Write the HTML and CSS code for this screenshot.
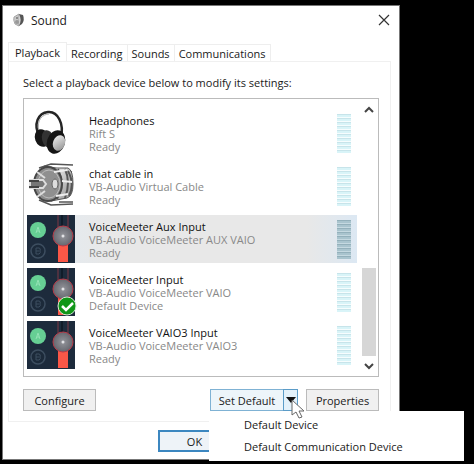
FILE: index.html
```html
<!DOCTYPE html>
<html lang="en">
<head>
  <meta charset="UTF-8">
  <meta name="viewport" content="width=device-width, initial-scale=1.0">
  <title>Sound</title>
  <link rel="stylesheet" href="styles.css">
</head>
<body>
  <!-- shared drawings and meters -->
  <svg class="defs" aria-hidden="true">
    <defs>
      <linearGradient id="metal" x1="0" y1="0" x2="1" y2="1">
        <stop offset="0" stop-color="#f4f4f4"/>
        <stop offset="1" stop-color="#8d8d8d"/>
      </linearGradient>
      <radialGradient id="knob">
        <stop offset="0" stop-color="#94959b"/>
        <stop offset="1" stop-color="#66676f"/>
      </radialGradient>
      <symbol id="mixer" viewBox="0 0 48 48">
        <rect width="48" height="48" fill="#1d2b3c"/>
        <path d="M31 0v12M41 0v12" stroke="#5d3441" stroke-width="1.5"/>
        <path d="M35 0v12" stroke="#111c29" stroke-width="2"/>
        <rect x="31" y="26" width="10" height="21" fill="#fb5747"/>
        <circle cx="11" cy="15" r="8" fill="#66cf94"/>
        <path d="M9 18l2-6 2 6M10 16h2" fill="none" stroke="#92e2b4"/>
        <circle cx="11" cy="36" r="7" fill="#1c2a3a" stroke="#3d4e60" stroke-width="1.5"/>
        <path d="M9 33v6h3q2-1 1-3 1-3-1-3zM9 36h3" fill="none" stroke="#3d4e60"/>
        <circle cx="36" cy="21" r="10" fill="url(#knob)" stroke="#b83b48"/>
        <circle cx="36" cy="21" r="1.5" fill="#e2e2e6"/>
      </symbol>
    </defs>
  </svg>

  <main class="window">
    <header class="titlebar">
      <svg class="app-icon" width="12" height="14" viewBox="0 0 12 14">
        <path d="M1 4L6 1v12L2 11Q0 7 1 4z" fill="#c9c9c9" stroke="#a5a5a5"/>
        <path d="M6 1l4 1q2 5-1 9l-3 2q3-6 0-12z" fill="#555"/>
        <circle cx="4" cy="5" r="1" fill="#777"/>
        <circle cx="4" cy="9" r="2" fill="#999"/>
      </svg>
      <h1>Sound</h1>
      <button class="close" aria-label="Close">
        <svg width="12" height="12" viewBox="0 0 12 12"><path d="M1 1l10 10M11 1L1 11" stroke="#333" stroke-width="1.2"/></svg>
      </button>
    </header>

    <nav class="tabs">
      <button class="tab active">Playback</button>
      <button class="tab">Recording</button>
      <button class="tab">Sounds</button>
      <button class="tab">Communications</button>
    </nav>

    <section class="panel">
      <p>Select a playback device below to modify its settings:</p>

      <div class="list">
        <ul class="devices">
          <li class="device">
            <svg class="icon" viewBox="0 0 48 48">
              <path d="M13 29C5 14 12 4 21 3c10-1 16 12 13 25" fill="none" stroke="#252525" stroke-width="2.5"/>
              <path d="M12 22C9 11 16 5 22 5" fill="none" stroke="#aaa"/>
              <ellipse cx="15" cy="29" rx="7" ry="9" fill="#161616" transform="rotate(-20 15 29)"/>
              <ellipse cx="21" cy="30" rx="6" ry="9" fill="#333" transform="rotate(-15 21 30)"/>
              <ellipse cx="29" cy="33" rx="9" ry="12" fill="#151515" transform="rotate(18 29 33)"/>
              <ellipse cx="32" cy="34" rx="6" ry="8" fill="url(#metal)" transform="rotate(20 32 34)"/>
            </svg>
            <div class="info"><strong>Headphones</strong><span>Rift S</span><span>Ready</span></div>
            <div class="meter"></div>
          </li>
          <li class="device">
            <svg class="icon" viewBox="0 0 48 48">
              <path d="M12 6l12-4 22 1M17 4l28 6M12 38l12 5 22-1M32 40h14" fill="none" stroke="#555" stroke-width="1.5"/>
              <path d="M27 6h14q5 2 5 16 0 12-6 14l-16 3z" fill="url(#metal)" stroke="#555"/>
              <path d="M31 7q7 15-1 30M38 7q6 13 0 29M41 9q7 13 1 25" fill="none" stroke="#555" stroke-width="2"/>
              <ellipse cx="21" cy="22" rx="14" ry="17" fill="#8c8c8c" stroke="#474747" stroke-width="2"/>
              <ellipse cx="22" cy="22" rx="11" ry="14" fill="#8f8f8f" stroke="#bcbcbc"/>
              <path d="M3 18h13l3 4-3 4H3zM10 10l8 6M10 35l8-6" fill="#777" stroke="#ddd" stroke-width="2"/>
              <path d="M2 19h10M2 25h10" stroke="#444" stroke-width="2"/>
              <ellipse cx="28" cy="22" rx="3" ry="5" fill="#ddd" stroke="#666"/>
              <path d="M27 10l13-2M29 34l12-2M35 19l10 1" stroke="#eee" stroke-width="2"/>
            </svg>
            <div class="info"><strong>chat cable in</strong><span>VB-Audio Virtual Cable</span><span>Ready</span></div>
            <div class="meter"></div>
          </li>
          <li class="device selected">
            <svg class="icon"><use href="#mixer"/></svg>
            <div class="info"><strong>VoiceMeeter Aux Input</strong><span>VB-Audio VoiceMeeter AUX VAIO</span><span>Ready</span></div>
            <div class="meter"></div>
          </li>
          <li class="device">
            <svg class="icon"><use href="#mixer"/></svg>
            <svg class="badge" viewBox="0 0 20 20">
              <circle cx="10" cy="10" r="9" fill="#109618" stroke="#d5ead6"/>
              <path d="M5 10l4 4 7-7" fill="none" stroke="#fff" stroke-width="2.5"/>
            </svg>
            <div class="info"><strong>VoiceMeeter Input</strong><span>VB-Audio VoiceMeeter VAIO</span><span>Default Device</span></div>
            <div class="meter"></div>
          </li>
          <li class="device">
            <svg class="icon"><use href="#mixer"/></svg>
            <div class="info"><strong>VoiceMeeter VAIO3 Input</strong><span>VB-Audio VoiceMeeter VAIO3</span><span>Ready</span></div>
            <div class="meter"></div>
          </li>
        </ul>
        <div class="scrollbar">
          <svg width="10" height="7" viewBox="0 0 10 7"><path d="M1 6l4-4 4 4" fill="none" stroke="#444" stroke-width="2"/></svg>
          <div class="thumb"></div>
          <svg width="10" height="7" viewBox="0 0 10 7"><path d="M1 1l4 4 4-4" fill="none" stroke="#444" stroke-width="2"/></svg>
        </div>
      </div>

      <div class="actions">
        <button class="btn">Configure</button>
        <div class="split">
          <button class="btn set-default">Set Default</button>
          <button class="btn arrow" aria-label="More defaults">
            <svg width="10" height="6" viewBox="0 0 10 6"><path d="M0 0h10L5 6z" fill="#111"/></svg>
          </button>
          <div class="menu">
            <button>Default Device</button>
            <button>Default Communication Device</button>
          </div>
          <svg class="cursor" width="13" height="20" viewBox="0 0 13 20">
            <path d="M1 1v15l4-3 3 6 3-1-3-6h5z" fill="#fff" stroke="#666"/>
          </svg>
        </div>
        <button class="btn">Properties</button>
      </div>
    </section>

    <footer class="footer">
      <button class="btn ok">OK</button>
    </footer>
  </main>
</body>
</html>
```
FILE: styles.css
```css
* {
  box-sizing: border-box;
}
body {
  margin: 0;
  padding: 5px 74px 5px 2px;
  background: #000;
  color: #1a1a1a;
  font-family: 'Open Sans', 'Noto Sans', sans-serif;
  font-size: 11px;
  line-height: 13px;
}
button {
  font: inherit;
  color: inherit;
  padding: 0;
  border: none;
  background: none;
}
svg {
  display: block;
  flex: none;
}
.defs {
  position: absolute;
  width: 0;
  height: 0;
}
.window {
  min-width: 398px;
  background: #fff;
  border: 1px solid #777;
  padding: 0 8px 7px 5px;
}

/* title bar */
.titlebar {
  display: flex;
  align-items: center;
  height: 28px;
  padding: 0 1px 0 5px;
}
h1 {
  flex: 1;
  margin: 0 0 0 6px;
  font-size: 12px;
  font-weight: normal;
}

/* tabs */
.tabs {
  display: flex;
  align-items: flex-end;
  height: 27px;
}
.tab {
  height: 17px;
  padding: 0 4px;
  border: 1px solid #eee;
  border-width: 1px 1px 0 0;
}
.tab.active {
  height: 19px;
  padding: 0 6px;
  border-left-width: 1px;
}
.panel {
  border: 1px solid #f0f0f0;
  padding: 14px 11px 10px 14px;
}
.panel p {
  margin: 0 0 9px;
}

/* device list */
.list {
  display: flex;
  border: 1px solid #bbb;
  padding: 1px 2px 1px 3px;
}
.devices {
  flex: 1;
  display: flex;
  flex-direction: column;
  gap: 5px;
  margin: 0;
  padding: 9px 0 6px;
  list-style: none;
}
.device {
  position: relative;
  display: flex;
  align-items: center;
  height: 48px;
  padding-right: 6px;
}
.device.selected {
  background: linear-gradient(90deg, #e2ecf5, #e8e8e8 25%, #e8e8e8 85%, #dce8f3);
}
.icon {
  width: 48px;
  height: 48px;
}
.info {
  flex: 1;
  margin-left: 14px;
}
.info strong,
.info span {
  display: block;
}
.info strong {
  color: #111;
  font-weight: normal;
}
.info span {
  color: #888;
}
.badge {
  position: absolute;
  left: 30px;
  bottom: 0;
  width: 20px;
  height: 20px;
}
.meter {
  width: 14px;
  height: 39px;
  background: repeating-linear-gradient(#c7e4ea 0 1px, #d9f4f8 1px 3px, #f6fdfe 3px 4px);
}
.selected .meter {
  background: repeating-linear-gradient(#93b0bb 0 1px, #a9c4ce 1px 3px, #c5d9e1 3px 4px);
}
.scrollbar {
  display: flex;
  flex-direction: column;
  align-items: center;
  width: 14px;
  margin-left: 5px;
  padding: 6px 0 5px;
}
.thumb {
  width: 14px;
  height: 88px;
  margin: auto 0 7px;
  background: #d6d6d6;
}

/* buttons */
.actions {
  display: flex;
  gap: 8px;
  margin-top: 12px;
}
.btn {
  width: 73px;
  height: 22px;
  background: #f0f0f0;
  border: 1px solid #bbb;
}
.split {
  position: relative;
  display: flex;
  margin-left: auto;
}
.set-default {
  border-color: #7fb2d4;
  border-right: none;
  background: #edf5fa;
}
.arrow {
  display: flex;
  align-items: center;
  justify-content: center;
  width: 15px;
  border-color: #5b9cc8;
  background: #e3f1fa;
}
.menu {
  position: absolute;
  top: 22px;
  left: -1px;
  width: 255px;
  padding: 2px 0 4px;
  background: #fff;
}
.menu button {
  display: block;
  width: 100%;
  height: 22px;
  padding-left: 35px;
  text-align: left;
}
.cursor {
  position: absolute;
  top: 10px;
  left: 81px;
}
.footer {
  padding: 8px 0 0 150px;
}
.ok {
  border: 2px solid #3c87c0;
  background: #eef3f8;
}
```
